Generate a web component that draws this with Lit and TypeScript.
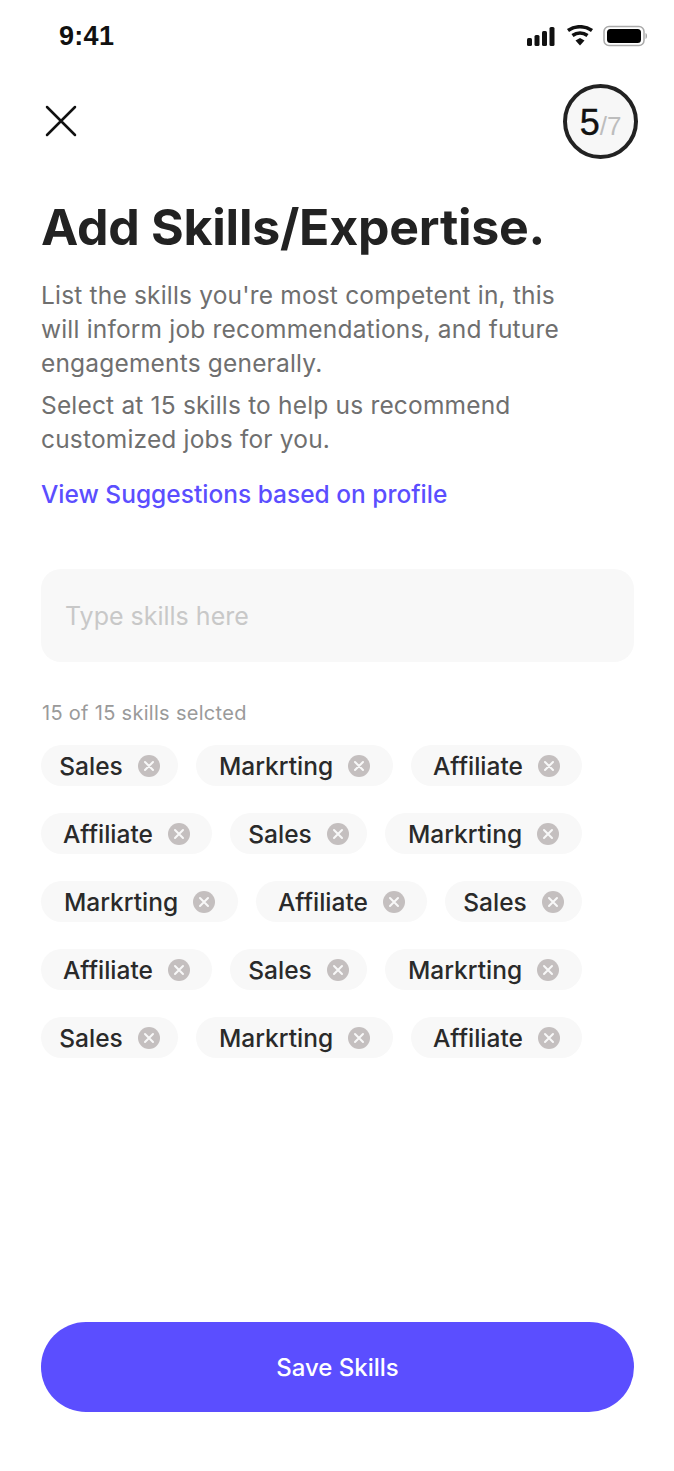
import { LitElement, html, css } from "lit";
import { customElement } from "lit/decorators.js";

type Skill = "Sales" | "Markrting" | "Affiliate";
const rows: Skill[][] = [
  ["Sales", "Markrting", "Affiliate"],
  ["Affiliate", "Sales", "Markrting"],
  ["Markrting", "Affiliate", "Sales"],
  ["Affiliate", "Sales", "Markrting"],
  ["Sales", "Markrting", "Affiliate"],
];

@customElement("app-root")
export class AppRoot extends LitElement {
  static styles = css`
    :host { display: block; width: 674px; height: 1471px; background: #fff; font-family: "Inter", "Liberation Sans", sans-serif; color: #222; overflow: hidden; }
    .page { height: 1471px; display: flex; flex-direction: column; box-sizing: border-box; }
    .status { height: 70px; display: flex; justify-content: space-between; align-items: flex-start; padding: 21px 27px 0 59px; box-sizing: border-box; }
    .time { font-family: "Liberation Sans", sans-serif; font-weight: 700; font-size: 27px; line-height: 31px; color: #111; letter-spacing: .3px; }
    .status svg { margin-top: 4px; display: block; }
    .top { display: flex; justify-content: space-between; align-items: center; padding: 14px 36px 0 44px; }
    .close { display: block; }
    .step { width: 75px; height: 75px; border-radius: 50%; border: 4px solid #222; box-sizing: border-box; background: #f7f7f7; display: flex; align-items: baseline; justify-content: center; font-family: "Liberation Sans", sans-serif; line-height: 69px; }
    .step b { font-weight: 400; font-size: 36px; color: #111; -webkit-text-stroke: .4px #111; }
    .step span { font-size: 26px; color: #bdbdbd; }
    .body { padding: 0 40px 0 41px; flex: 1; display: flex; flex-direction: column; }
    h1 { margin: 39px 0 0; font-size: 50px; line-height: 58px; font-weight: 700; letter-spacing: -.25px; color: #222; white-space: nowrap; }
    p { margin: 0; font-size: 24.5px; line-height: 34px; letter-spacing: .18px; color: #6f6f6f; white-space: nowrap; }
    .p1 { margin-top: 22px; }
    .p2 { margin-top: 8px; }
    .link { margin-top: 21px; font-size: 24.5px; line-height: 34px; font-weight: 500; color: #5b4eff; white-space: nowrap; }
    .input { margin-top: 58px; height: 93px; width: 593px; border-radius: 20px; background: #f8f8f8; display: flex; align-items: center; padding-left: 24px; box-sizing: border-box; font-size: 25px; color: #c8c8c8; }
    .count { margin-top: 38px; font-size: 20px; line-height: 26px; letter-spacing: .3px; padding-left: 1px; color: #9a9a9a; }
    .rows { margin-top: 19px; display: flex; flex-direction: column; gap: 27px; }
    .row { display: flex; gap: 18px; }
    .chip { height: 41px; border-radius: 21px; background: #f8f8f8; display: flex; align-items: center; justify-content: center; gap: 15px; font-size: 24.5px; font-weight: 500; color: #2a2a2a; box-sizing: border-box; }
    .Sales { width: 137px; }
    .Markrting { width: 197px; }
    .Affiliate { width: 171px; }
    .chip svg { display: block; flex: none; }
    .save { margin: 0 0 59px; height: 90px; border-radius: 45px; background: #5b4eff; color: #fff; display: flex; align-items: center; justify-content: center; font-size: 24px; font-weight: 500; }
    .spacer { flex: 1; }
  `;

  private x() {
    return html`<svg width="22" height="22" viewBox="0 0 22 22"><circle cx="11" cy="11" r="11" fill="#c4bfbf"/><path d="M7 7l8 8M15 7l-8 8" stroke="#f8f8f8" stroke-width="2" stroke-linecap="round"/></svg>`;
  }

  render() {
    return html`<div class="page">
      <div class="status">
        <div class="time">9:41</div>
        <svg width="122" height="24" viewBox="0 0 122 24">
          <rect x="2" y="13" width="5" height="8" rx="1.5" fill="#111"/><rect x="9.5" y="10" width="5" height="11" rx="1.5" fill="#111"/><rect x="17" y="6" width="5" height="15" rx="1.5" fill="#111"/><rect x="24.5" y="2" width="5" height="19" rx="1.5" fill="#111"/>
          <path d="M43 7.5a21 21 0 0 1 24 0" fill="none" stroke="#111" stroke-width="3.6" transform="translate(0 -2)"/><path d="M47.5 11.5a13 13 0 0 1 15 0" fill="none" stroke="#111" stroke-width="3.6" transform="translate(0 -1)"/><path d="M50.5 15.5l4.5-2.5 4.5 2.5-4.500 5z" fill="#111"/>
          <rect x="79" y="1.500" width="40" height="19" rx="5" fill="none" stroke="#aaa" stroke-width="1.500"/><rect x="82" y="4" width="34" height="14" rx="3.500" fill="#000"/><path d="M120.500 8v6a3 3 0 0 0 1.500-3a3 3 0 0 0-1.500-3z" fill="#aaa"/>
        </svg>
      </div>
      <div class="top">
        <svg class="close" width="36" height="36" viewBox="0 0 36 36"><path d="M3 3l28 28M31 3L3 31" stroke="#111" stroke-width="2.500" stroke-linecap="round" fill="none"/></svg>
        <div class="step"><b>5</b><span>/7</span></div>
      </div>
      <div class="body">
        <h1>Add Skills/Expertise.</h1>
        <p class="p1">List the skills you're most competent in, this<br>will inform job recommendations, and future<br>engagements generally.</p>
        <p class="p2">Select at 15 skills to help us recommend<br>customized jobs for you.</p>
        <div class="link">View Suggestions based on profile</div>
        <div class="input">Type skills here</div>
        <div class="count">15 of 15 skills selcted</div>
        <div class="rows">
          ${rows.map((r) => html`<div class="row">${r.map((s) => html`<div class="chip ${s}">${s}${this.x()}</div>`)}</div>`)}
        </div>
        <div class="spacer"></div>
        <div class="save">Save Skills</div>
      </div>
    </div>`;
  }
}
